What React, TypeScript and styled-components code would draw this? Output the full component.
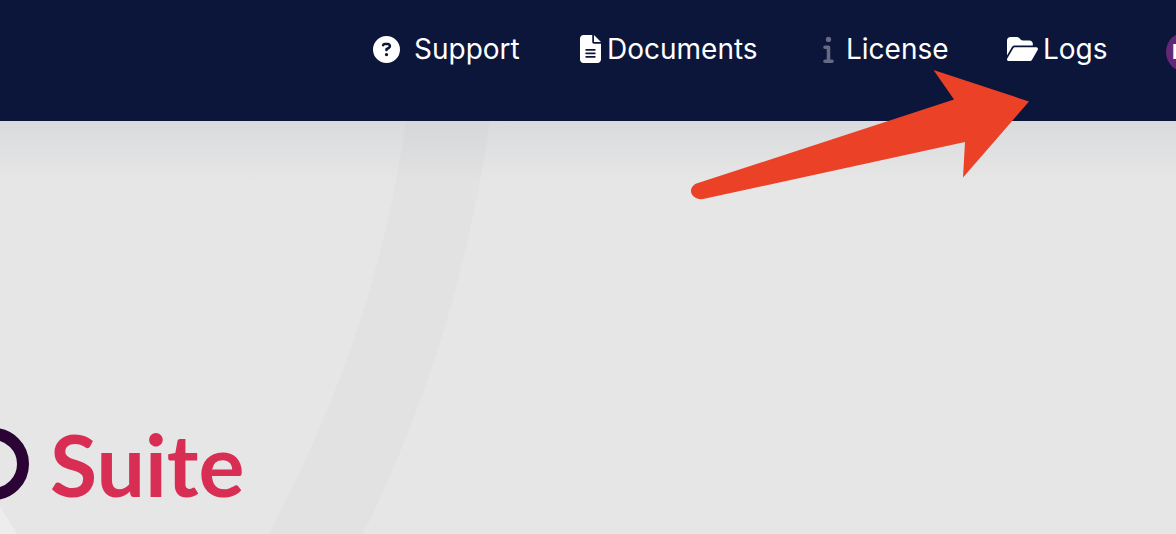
import React from "react";
import styled, { createGlobalStyle } from "styled-components";
import { FaCircleQuestion, FaFileLines, FaInfo, FaFolderOpen } from "react-icons/fa6";

const GlobalStyle = createGlobalStyle`
  *, *::before, *::after { box-sizing: border-box; }
  html, body, #root { height: 100%; }
  body { margin: 0; background: #e6e6e6; }
`;

const Page = styled.div`
  position: relative;
  display: flex;
  flex-direction: column;
  min-height: 100%;
  overflow: hidden;
  font-family: Inter, "Liberation Sans", sans-serif;
`;

const Header = styled.header`
  display: flex;
  align-items: flex-start;
  justify-content: flex-end;
  height: 121px;
  padding-top: 28px;
  overflow: hidden;
  background: #0c163b;
`;

const Nav = styled.nav`
  display: flex;
  gap: 60px;
  margin-right: 61px;
`;

const NavLink = styled.a<{ $icon: number; $gap: number; $width: number; $muted?: boolean }>`
  display: flex;
  align-items: center;
  gap: ${(p) => p.$gap}px;
  width: ${(p) => p.$width}px;
  height: 42px;
  color: #fff;
  font-size: 28px;
  line-height: 42px;
  text-decoration: none;
  white-space: nowrap;

  svg {
    flex: none;
    width: ${(p) => p.$icon}px;
    color: ${(p) => (p.$muted ? "#666a84" : "#fff")};
  }
`;

const Avatar = styled.button`
  flex: none;
  width: 40px;
  height: 40px;
  margin: 4px -30px 0 0;
  padding: 0 0 0 6px;
  border: 0;
  border-radius: 50%;
  background: #632775;
  color: #fff;
  font: 700 20px/40px Inter, sans-serif;
  text-align: left;
`;

const Main = styled.main`
  position: relative;
  display: flex;
  flex: 1;
  align-items: flex-end;
  min-height: 413px;
  overflow: hidden;
  background: #e6e6e6;
`;

const Backdrop = styled.svg`
  position: absolute;
  top: 0;
  left: 0;
`;

const Shade = styled.div`
  position: absolute;
  inset: 0 0 auto;
  height: 60px;
  background: linear-gradient(rgba(12, 40, 70, 0.06), rgba(12, 40, 70, 0));
`;

const Logo = styled.div`
  position: relative;
  display: flex;
  align-items: center;
  width: 243px;
  height: 140px;
  overflow: hidden;
`;

const Ring = styled.svg`
  flex: none;
  margin-right: 20px;
`;

const LogoText = styled.span`
  color: #d82e54;
  font: 700 86px/136px Lato, "Open Sans", sans-serif;
`;

const Arrow = styled.svg`
  position: absolute;
  top: 68px;
  right: 146px;
  pointer-events: none;
`;

export default function App() {
  return (
    <Page>
      <GlobalStyle />
      <Header>
        <Nav>
          <NavLink href="#support" $width={147} $gap={14} $icon={27}><FaCircleQuestion size={27} />Support</NavLink>
          <NavLink href="#documents" $width={183} $gap={6} $icon={21}><FaFileLines size={28} />Documents</NavLink>
          <NavLink href="#license" $width={124} $gap={12} $icon={11} $muted><FaInfo size={28} />License</NavLink>
          <NavLink href="#logs" $width={98} $gap={5} $icon={31}><FaFolderOpen size={28} />Logs</NavLink>
        </Nav>
        <Avatar aria-label="Account">E</Avatar>
      </Header>
      <Main>
        <Backdrop width="500" height="413" viewBox="0 0 500 413" aria-hidden="true">
          <path fill="#e2e2e2" d="M406 0C385 148 341 276 269 413H363C430 276 468 148 490 0Z" />
          <path fill="#ededed" d="M0 386L17 413H0Z" />
        </Backdrop>
        <Shade />
        <Logo>
          <Ring width="30" height="74" viewBox="0 0 30 74" aria-hidden="true">
            <circle cx="-7" cy="37" r="30" fill="none" stroke="#2c0335" strokeWidth="12" />
          </Ring>
          <LogoText>Suite</LogoText>
        </Logo>
      </Main>
      <Arrow width="340" height="134" viewBox="690 68 340 134" aria-hidden="true">
        <path fill="#eb4127" d="M933.500 70L1029 101.500L963 177.500L965 142L703 199C697 200 691 196 691 191C691 187 694 184 698 183L954 99.500Z" />
      </Arrow>
    </Page>
  );
}
